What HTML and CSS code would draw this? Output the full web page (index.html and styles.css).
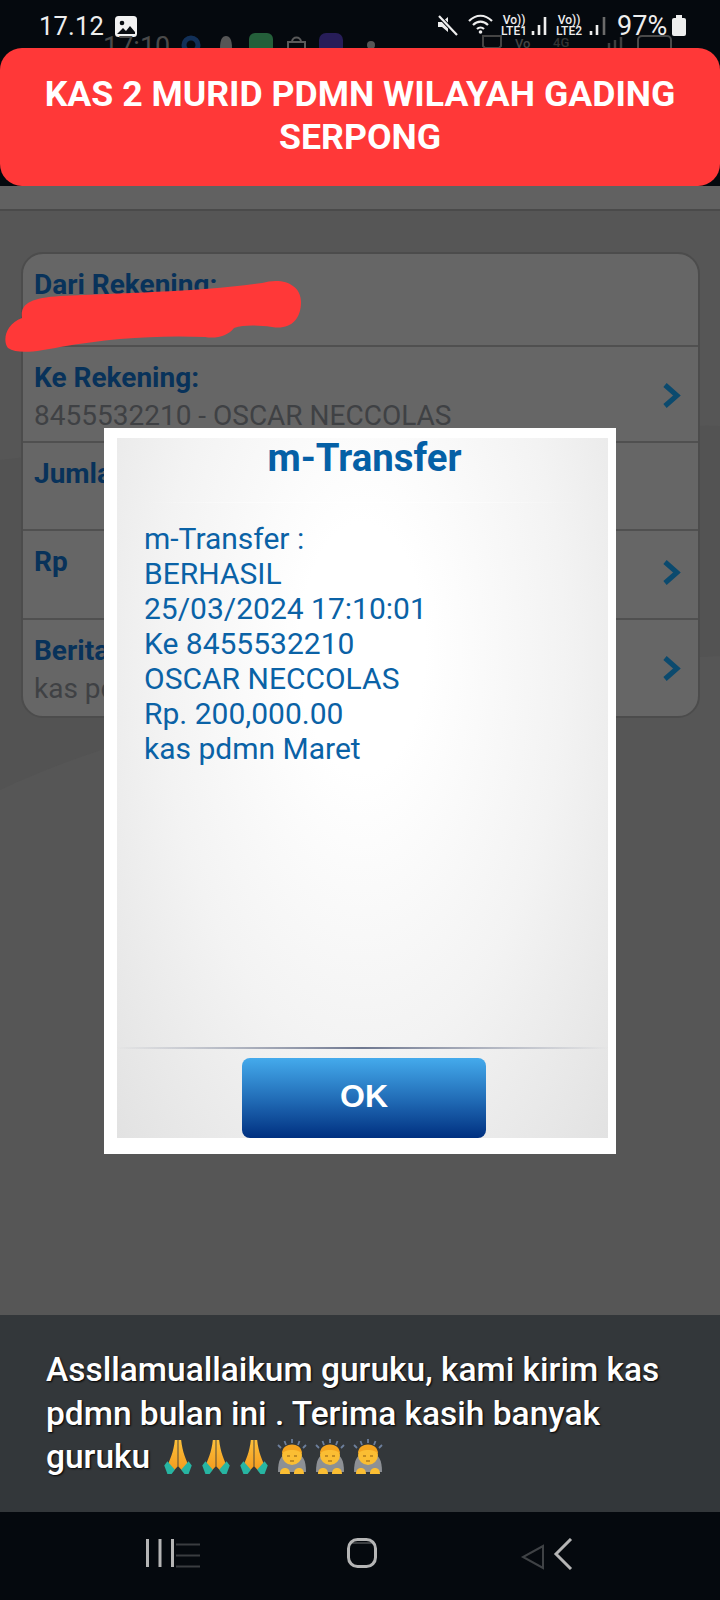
FILE: index.html
```html
<!DOCTYPE html>
<html lang="id">
<head>
    <meta charset="UTF-8">
    <meta name="viewport" content="width=device-width, initial-scale=1.0">
    <title>m-Transfer</title>
    <link rel="stylesheet" href="styles.css">
</head>
<body>
    <svg class="defs" width="0" height="0">
        <defs>
            <linearGradient id="hand-gold" x1="0" y1="0" x2="0" y2="1">
                <stop offset="0" stop-color="#fdc03a"/>
                <stop offset="1" stop-color="#f39a1d"/>
            </linearGradient>
            <symbol id="emoji-pray" viewBox="0 0 26 34">
                <path d="M10 1h2.600v25L8 31 2 27C5 21 9 12 10 1z" fill="url(#hand-gold)"/>
                <path d="M16 1h-2.600v25l4.600 5 6-4C21 21 17 12 16 1z" fill="url(#hand-gold)"/>
                <path d="M0 25l3-4 7 8-3 4H3z" fill="#27b5a2"/>
                <path d="M26 25l-3-4-7 8 3 4h4z" fill="#27b5a2"/>
            </symbol>
            <symbol id="emoji-bow" viewBox="0 0 30 36">
                <path d="M9 6l-1.500-4M15 4V0M21 6l1.500-4M4 9L1 6M26 9l3-3" stroke="#6d7f9c" stroke-width="1.800" fill="none"/>
                <path d="M1 33c0-12 3-17 9-18h10c6 1 9 6 9 18z" fill="#8d9095"/>
                <circle cx="15" cy="16" r="10" fill="#fbbe33"/>
                <path d="M5 15c0-6 4-9.500 10-9.500s10 3.500 10 9.500c-2-3-5-4-10-4s-8 1-10 4z" fill="#f4a41f"/>
                <path d="M10 17h3M17 17h3M13 22h4" stroke="#8a5a14" stroke-width="1.200" fill="none"/>
                <path d="M3 35c0-4 2-6 5-6s5 2 5 6zM17 35c0-4 2-6 5-6s5 2 5 6z" fill="#fbbe33"/>
            </symbol>
        </defs>
    </svg>

    <div class="status-bar">
        <!-- notifications of the screen underneath, showing through -->
        <svg class="status-ghost" width="720" height="48" viewBox="0 0 720 48">
            <text x="103" y="56" class="ghost-time">17:10</text>
            <circle cx="191" cy="45" r="7" fill="none" stroke="#123058" stroke-width="5"/>
            <path d="M226 36c4 0 6 4 6 12h-12c0-8 2-12 6-12z" fill="#565656"/>
            <rect x="249" y="33" width="24" height="24" rx="6" fill="#245f3a"/>
            <path d="M288 42h17v8h-17zM292 42c0-6 9-6 9 0" fill="none" stroke="#5a5a5a" stroke-width="2"/>
            <rect x="319" y="33" width="24" height="24" rx="7" fill="#271d58"/>
            <circle cx="371" cy="45" r="4" fill="#565656"/>
            <path d="M483 36h18v10l-2 2h-14l-2-2z" fill="none" stroke="#444" stroke-width="2"/>
            <text x="515" y="48" class="ghost-small">Vo</text>
            <text x="553" y="47" class="ghost-small ghost-dim">4G</text>
            <path d="M609 48v-5M615 48v-8M621 48V37" stroke="#3f3f3f" stroke-width="2.500"/>
            <rect x="638" y="36" width="33" height="20" rx="4" fill="none" stroke="#4a4a4a" stroke-width="2"/>
        </svg>

        <span class="status-time">17.12</span>
        <svg class="status-photo" width="22" height="21" viewBox="0 0 22 21">
            <rect width="22" height="21" rx="3.500" fill="#f2f2f2"/>
            <circle cx="7" cy="7" r="2.300" fill="#0a0e13"/>
            <path d="M2 18l6-6 3 3 4-5 5 6v2z" fill="#0a0e13"/>
        </svg>

        <div class="status-right">
            <svg width="21" height="21" viewBox="0 0 21 21">
                <path d="M1 7h4l6-5v15l-6-5H1z" fill="#eee"/>
                <path d="M2 1l18 19" stroke="#05090e" stroke-width="4"/>
                <path d="M2 1l18 19" stroke="#eee" stroke-width="2.200"/>
            </svg>
            <svg class="status-wifi" width="25" height="20" viewBox="0 0 25 20">
                <path d="M1 7c7-7 16-7 23 0M5 11c4.500-4.500 10.500-4.500 15 0M9 15c2-2 5-2 7 0" fill="none" stroke="#eee" stroke-width="2.200"/>
                <circle cx="12.500" cy="18" r="1.800" fill="#eee"/>
            </svg>
            <div class="lte lte-one"><span>Vo))</span><span>LTE1</span></div>
            <svg class="signal" width="18" height="19" viewBox="0 0 18 19">
                <path d="M2 19v-4M8 19V9M14 19V1" stroke="#eee" stroke-width="2.600"/>
            </svg>
            <div class="lte lte-two"><span>Vo))</span><span>LTE2</span></div>
            <svg class="signal signal-two" width="18" height="19" viewBox="0 0 18 19">
                <path d="M2 19v-4M8 19V9" stroke="#eee" stroke-width="2.600"/>
                <path d="M15 19V1" stroke="#6b6b6b" stroke-width="2.600"/>
            </svg>
            <span class="status-battery-text">97%</span>
            <div class="battery"></div>
        </div>
    </div>

    <div class="banner">KAS 2 MURID PDMN WILAYAH GADING SERPONG</div>

    <div class="main">
        <svg class="swoosh" width="720" height="1129" viewBox="0 0 720 1129">
            <path d="M0 274C200 250 480 236 720 240V470C480 480 200 510 0 604z" fill="#535353"/>
        </svg>

        <div class="app-header"></div>

        <div class="content">
            <div class="card">
                <div class="row row-from">
                    <div class="row-text">
                        <div class="row-label">Dari Rekening:</div>
                    </div>
                </div>
                <div class="row row-to">
                    <div class="row-text">
                        <div class="row-label">Ke Rekening:</div>
                        <div class="row-value">8455532210 - OSCAR NECCOLAS</div>
                    </div>
                    <svg class="chevron" width="20" height="27" viewBox="0 0 20 27"><path d="M4 3l12 10.500L4 24" fill="none" stroke="#0b4a6e" stroke-width="5"/></svg>
                </div>
                <div class="row row-amount">
                    <div class="row-text">
                        <div class="row-label">Jumlah</div>
                    </div>
                </div>
                <div class="row row-rp">
                    <div class="row-text">
                        <div class="row-label">Rp</div>
                    </div>
                    <svg class="chevron chevron-rp" width="20" height="27" viewBox="0 0 20 27"><path d="M4 3l12 10.500L4 24" fill="none" stroke="#0b4a6e" stroke-width="5"/></svg>
                </div>
                <div class="row row-news">
                    <div class="row-text">
                        <div class="row-label">Berita</div>
                        <div class="row-value">kas pdmn Maret</div>
                    </div>
                    <svg class="chevron" width="20" height="27" viewBox="0 0 20 27"><path d="M4 3l12 10.500L4 24" fill="none" stroke="#0b4a6e" stroke-width="5"/></svg>
                </div>
            </div>
        </div>

        <!-- coretan merah yang menutupi nomor rekening -->
        <svg class="redaction" width="310" height="90" viewBox="0 270 310 90">
            <path d="M22 318C20 304 30 298 60 296C120 293 200 292 262 283C282 277 301 284 301 302C301 320 290 330 272 327C256 325 244 325 234 328C228 336 216 339 205 337C160 335 110 338 60 347C40 351 18 355 8 348C2 340 6 324 22 318z" fill="#ff3838"/>
        </svg>

        <div class="modal">
            <div class="modal-inner">
                <div class="modal-title">m-Transfer</div>
                <div class="modal-body">
                    <div>m-Transfer :</div>
                    <div>BERHASIL</div>
                    <div>25/03/2024 17:10:01</div>
                    <div>Ke 8455532210</div>
                    <div>OSCAR NECCOLAS</div>
                    <div>Rp. 200,000.00</div>
                    <div>kas pdmn Maret</div>
                </div>
                <div class="modal-footer">
                    <div class="ok-button">OK</div>
                </div>
            </div>
        </div>
    </div>

    <div class="caption">
        <p class="caption-text">Assllamuallaikum guruku, kami kirim kas pdmn bulan ini . Terima kasih banyak guruku <span class="emojis"><svg class="emoji"><use href="#emoji-pray"/></svg><svg class="emoji"><use href="#emoji-pray"/></svg><svg class="emoji"><use href="#emoji-pray"/></svg><svg class="emoji"><use href="#emoji-bow"/></svg><svg class="emoji"><use href="#emoji-bow"/></svg><svg class="emoji"><use href="#emoji-bow"/></svg></span></p>
    </div>

    <div class="nav-bar">
        <svg class="nav-recent" width="54" height="30" viewBox="0 0 54 30">
            <path d="M1.500 1v28M14 1v28M26.500 1v28" stroke="#b5b5b5" stroke-width="3"/>
            <path d="M30 6.500h24M30 17.500h24M30 28.500h24" stroke="#3a3d40" stroke-width="2"/>
        </svg>
        <svg class="nav-home" width="30" height="30" viewBox="0 0 30 30">
            <path d="M5 5h20" stroke="#3a3d40" stroke-width="2"/>
            <rect x="1.500" y="1.500" width="27" height="27" rx="9" fill="none" stroke="#b5b5b5" stroke-width="3"/>
        </svg>
        <svg class="nav-back" width="53" height="32" viewBox="0 0 53 32">
            <path d="M23 8v22L3 19z" fill="none" stroke="#3f4245" stroke-width="2"/>
            <path d="M51 1L36 16l15 15" fill="none" stroke="#b5b5b5" stroke-width="3"/>
        </svg>
    </div>
</body>
</html>
```

FILE: styles.css
```css
html, body {
    margin: 0;
    padding: 0;
}
body {
    width: 720px;
    height: 1600px;
    overflow: hidden;
    display: flex;
    flex-direction: column;
    font-family: Roboto, "Liberation Sans", sans-serif;
    background-color: #05090e;
}
.defs {
    position: absolute;
}

/* status bar */
.status-bar {
    height: 48px;
    flex-shrink: 0;
    display: flex;
    align-items: flex-start;
    padding-left: 39px;
    box-sizing: border-box;
    position: relative;
    overflow: hidden;
    color: #eee;
    background-color: #05090e;
}
.status-ghost {
    position: absolute;
    left: 0;
    top: 0;
}
.ghost-time {
    font-size: 27px;
    fill: #4a4a4a;
}
.ghost-small {
    font-size: 13px;
    font-weight: 500;
    fill: #444;
}
.ghost-dim {
    fill: #333;
}
.status-time {
    font-size: 25.500px;
    line-height: 30px;
    margin-top: 11px;
    letter-spacing: 0.200px;
}
.status-photo {
    margin: 16px 0 0 11px;
}
.status-right {
    display: flex;
    align-items: flex-start;
    margin-left: 300px;
    position: relative;
}
.status-right > svg:first-child {
    margin-top: 15px;
}
.status-wifi {
    margin: 14px 0 0 10px;
}
.lte {
    display: flex;
    flex-direction: column;
    align-items: center;
    width: 26px;
    font-size: 12px;
    font-weight: 500;
    line-height: 11px;
    margin-top: 15px;
}
.lte-one {
    margin-left: 8px;
}
.lte-two {
    margin-left: 7px;
}
.signal {
    margin: 16px 0 0 4px;
}
.signal-two {
    margin-left: 7px;
}
.status-battery-text {
    font-size: 27px;
    line-height: 30px;
    margin: 11px 0 0 10px;
}
.battery {
    width: 14px;
    height: 18px;
    margin: 18px 0 0 5px;
    background-color: #eee;
    border-radius: 2px;
    position: relative;
}
.battery::before {
    content: "";
    position: absolute;
    top: -3px;
    left: 4px;
    width: 6px;
    height: 3px;
    background-color: #eee;
}

/* red title */
.banner {
    height: 138px;
    flex-shrink: 0;
    box-sizing: border-box;
    padding: 25px 30px 0;
    text-align: center;
    font-size: 35.700px;
    font-weight: 700;
    line-height: 43px;
    color: #fff;
    background-color: #ff3838;
    border-radius: 22px;
    position: relative;
    z-index: 3;
}

/* dimmed screen */
.main {
    flex: 1;
    position: relative;
    background-color: #565656;
}
.swoosh {
    position: absolute;
    left: 0;
    top: 0;
}
.app-header {
    height: 23px;
    background-color: #616161;
    border-bottom: 2px solid #4a4a4a;
    position: relative;
}
.content {
    padding: 41px 20px 0 21px;
    position: relative;
}
.card {
    border: 2px solid #4c4c4c;
    border-radius: 22px;
    background-color: #666;
    box-sizing: border-box;
    height: 466px;
    display: flex;
    flex-direction: column;
    overflow: hidden;
}
.row {
    display: flex;
    justify-content: space-between;
    padding: 11px 17px 0 11px;
    border-bottom: 2px solid #505050;
    box-sizing: border-box;
}
.row:last-child {
    border-bottom: none;
}
.row-from { height: 93px; }
.row-to { height: 96px; }
.row-amount { height: 88px; }
.row-rp { height: 89px; }
.row-news { flex: 1; }
.row-label {
    font-size: 28px;
    font-weight: 700;
    line-height: 39px;
    color: #08325a;
}
.row-value {
    font-size: 28px;
    line-height: 38px;
    color: #3f4144;
}
.chevron {
    margin-top: 24px;
}
.chevron-rp {
    margin-top: 17px;
}

.redaction {
    position: absolute;
    left: 0;
    top: 84px;
}

/* dialog */
.modal {
    position: absolute;
    left: 104px;
    top: 242px;
    width: 512px;
    height: 726px;
    box-sizing: border-box;
    padding: 10px 8px 16px 13px;
    background-color: #fff;
}
.modal-inner {
    height: 100%;
    display: flex;
    flex-direction: column;
    background: radial-gradient(ellipse at 50% 30%, #fff 18%, #f3f3f3 58%, #e2e2e2 100%);
}
.modal-title {
    height: 65px;
    flex-shrink: 0;
    box-sizing: border-box;
    padding-left: 4px;
    text-align: center;
    font-size: 38.400px;
    font-weight: 700;
    line-height: 40px;
    color: #0560a6;
    border-bottom: 1px solid transparent;
    border-image: linear-gradient(90deg, transparent 5%, #fff 50%, transparent 95%) 1;
}
.modal-body {
    flex: 1;
    padding: 18px 27px 0;
    font-size: 30px;
    line-height: 35px;
    color: #0a62a6;
}
.modal-footer {
    height: 91px;
    flex-shrink: 0;
    box-sizing: border-box;
    padding-top: 9px;
    display: flex;
    justify-content: center;
    border-top: 2px solid transparent;
    border-image: linear-gradient(90deg, transparent, #6f7890 50%, transparent) 1;
}
.ok-button {
    width: 244px;
    margin-left: 3px;
    padding-bottom: 4px;
    box-sizing: border-box;
    border-radius: 8px;
    display: flex;
    align-items: center;
    justify-content: center;
    font-family: "Liberation Sans", Arial, sans-serif;
    font-size: 32px;
    font-weight: 700;
    color: #fff;
    background: linear-gradient(#44aaec, #1f68b3 55%, #003080);
}

/* caption */
.caption {
    height: 197px;
    flex-shrink: 0;
    box-sizing: border-box;
    padding: 33px 46px 0;
    background-color: #33373a;
}
.caption-text {
    margin: 0;
    font-size: 33.500px;
    font-weight: 500;
    line-height: 43.500px;
    color: #fff;
    text-shadow: 1px 1px 2px #000;
}
.emojis {
    display: inline-flex;
    align-items: center;
    vertical-align: -7px;
}
.emoji {
    display: block;
    width: 38px;
    height: 36px;
}

/* nav bar */
.nav-bar {
    height: 88px;
    flex-shrink: 0;
    box-sizing: border-box;
    padding: 26px 0 0 146px;
    display: flex;
    align-items: flex-start;
    background-color: #05090e;
}
.nav-home {
    margin-left: 147px;
}
.nav-back {
    margin-left: 143px;
}
```
